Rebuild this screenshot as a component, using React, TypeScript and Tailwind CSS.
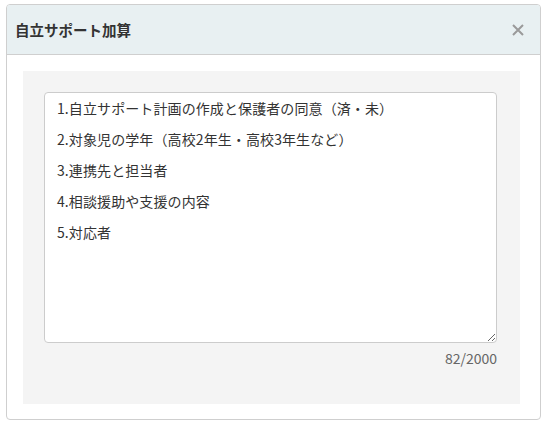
import React from "react";

const text = [
  "1.自立サポート計画の作成と保護者の同意（済・未）",
  "2.対象児の学年（高校2年生・高校3年生など）",
  "3.連携先と担当者",
  "4.相談援助や支援の内容",
  "5.対応者",
].join("\n");

export default function App() {
  return (
    <div
      className="w-[545px] h-[433px] bg-white pt-[4px] pl-[6px]"
      style={{ fontFamily: '"Noto Sans CJK JP", "Noto Sans", sans-serif' }}
    >
      <div className="w-[535px] h-[416px] border border-[#cfcfcf] rounded-[4px] flex flex-col overflow-hidden">
        <div className="h-[50px] bg-[#e8f0f2] border-b border-[#cfcfcf] flex items-center justify-between pl-[8px] pr-[16px]">
          <span className="text-[14.5px] font-bold text-[#333]">自立サポート加算</span>
          <svg width="12" height="12" viewBox="0 0 12 12">
            <path d="M1 1L11 11M11 1L1 11" stroke="#9a9a9a" strokeWidth="2" />
          </svg>
        </div>
        <div className="flex-1 pt-[16px] pl-[16px] pr-[20px] pb-[15px]">
          <div className="h-full bg-[#f4f4f4] pt-[21px] pl-[21px] pr-[21px]">
            <textarea
              className="block w-[453px] h-[251px] bg-white border border-[#cccccc] rounded-[4px] pl-[12px] pr-[8px] pt-0 text-[14px] leading-[31px] text-[#333] outline-none resize-y tracking-[0.1px]"
              style={{ fontFamily: '"Noto Sans CJK JP", "Noto Sans", sans-serif' }}
              defaultValue={text}
            />
            <div className="w-[453px] text-right text-[14px] text-[#666] mt-[5px] leading-[20px]">82/2000</div>
          </div>
        </div>
      </div>
    </div>
  );
}
